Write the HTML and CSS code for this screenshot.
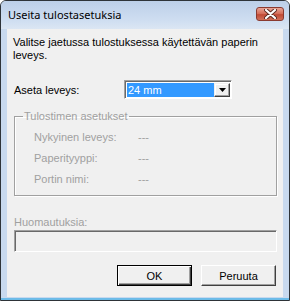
FILE: index.html
```html
<!DOCTYPE html>
<html lang="fi">
<head>
    <meta charset="UTF-8">
    <meta name="viewport" content="width=device-width, initial-scale=1.0">
    <title>Useita tulostasetuksia</title>
    <link rel="stylesheet" href="styles.css">
</head>
<body>

<div class="window">
    <div class="titlebar">
        <span class="title">Useita tulostasetuksia</span>
        <button class="close-btn" aria-label="Sulje">
            <svg width="13" height="10" viewBox="0 0 13 10">
                <path d="M2 1 L11 9 M11 1 L2 9" stroke="#5a2a22" stroke-width="4" stroke-linecap="round"/>
                <path d="M2 1 L11 9 M11 1 L2 9" stroke="#ffffff" stroke-width="2.2" stroke-linecap="round"/>
            </svg>
        </button>
    </div>

    <div class="client">
        <p class="intro">Valitse jaetussa tulostuksessa käytettävän paperin leveys.</p>

        <div class="width-row">
            <span class="label">Aseta leveys:</span>
            <div class="combo">
                <span class="combo-value">24 mm</span>
                <span class="combo-arrow">
                    <svg width="7" height="4" viewBox="0 0 7 4"><path d="M0 0 H7 L3.5 4 Z" fill="#000"/></svg>
                </span>
            </div>
        </div>

        <fieldset class="group">
            <legend>Tulostimen asetukset</legend>
            <div class="info-row">
                <span class="info-label">Nykyinen leveys:</span>
                <span class="info-value">---</span>
            </div>
            <div class="info-row">
                <span class="info-label">Paperityyppi:</span>
                <span class="info-value">---</span>
            </div>
            <div class="info-row">
                <span class="info-label">Portin nimi:</span>
                <span class="info-value">---</span>
            </div>
        </fieldset>

        <div class="notes-label">Huomautuksia:</div>
        <div class="notes-box"></div>

        <div class="buttons">
            <button class="btn btn-default">OK</button>
            <button class="btn">Peruuta</button>
        </div>
    </div>
</div>

</body>
</html>
```

FILE: styles.css
```css
body {
    margin: 0;
    font-family: "Liberation Sans", Arial, sans-serif;
    font-size: 11px;
    background: #ffffff;
}

.window {
    width: 290px;
    height: 301px;
    box-sizing: border-box;
    border: 1px solid #2e3338;
    border-radius: 6px 6px 0 0;
    background: #c8d9ee;
    padding: 0 6px 3px 6px;
    display: flex;
    flex-direction: column;
    box-shadow: inset 0 -2px 0 #6cbbe8;
}

.titlebar {
    height: 28px;
    margin: 0 -6px;
    padding: 0 5px 0 7px;
    display: flex;
    align-items: flex-start;
    background: linear-gradient(#bccfe8, #cfdef1 70%, #dbe6f3);
    border-radius: 5px 5px 0 0;
}

.title {
    font-family: "Noto Sans", sans-serif;
    font-size: 11px;
    line-height: 16px;
    margin-top: 6px;
    color: #000;
}

.close-btn {
    margin-left: auto;
    margin-top: 6px;
    width: 28px;
    height: 14px;
    padding: 0;
    border: 1px solid #8a3a30;
    border-radius: 3px;
    background: linear-gradient(#e8a596, #d46a55 50%, #c04a35 55%, #d0705a);
    display: flex;
    align-items: center;
    justify-content: center;
}

.client {
    flex: 1;
    background: #f0f0f0;
    padding: 0 6px 0 7px;
    display: flex;
    flex-direction: column;
}

.intro {
    margin: 7px 0 0 -1px;
    line-height: 13px;
    width: 250px;
}

.width-row {
    display: flex;
    align-items: center;
    margin-top: 18px;
}

.label {
    width: 110px;
}

.combo {
    width: 108px;
    height: 19px;
    box-sizing: border-box;
    border: 1px solid;
    border-color: #a0a0a0 #ffffff #ffffff #a0a0a0;
    box-shadow: inset 1px 1px 0 #696969;
    background: #ffffff;
    display: flex;
    padding: 2px 1px 1px 2px;
}

.combo-value {
    flex: 1;
    background: #3399ff;
    color: #ffffff;
    line-height: 15px;
    padding-left: 1px;
}

.combo-arrow {
    width: 16px;
    box-sizing: border-box;
    border: 1px solid;
    border-color: #f0f0f0 #404040 #404040 #f0f0f0;
    box-shadow: inset -1px -1px 0 #a0a0a0, inset 1px 1px 0 #ffffff;
    background: #f0f0f0;
    display: flex;
    align-items: center;
    justify-content: center;
}

.group {
    margin: 11px 0 0 0;
    padding: 8px 0 0 19px;
    height: 86px;
    box-sizing: border-box;
    border: 1px solid #a0a0a0;
    box-shadow: 1px 1px 0 #ffffff, inset 1px 1px 0 #ffffff;
    color: #a0a0a0;
}

.group legend {
    padding: 0 1px;
    margin-left: -11px;
    line-height: 13px;
}

.info-row {
    display: flex;
    line-height: 13px;
    margin-bottom: 8px;
}

.info-label {
    width: 104px;
}

.notes-label {
    color: #a0a0a0;
    margin-top: 20px;
    line-height: 13px;
}

.notes-box {
    margin-top: 1px;
    height: 22px;
    box-sizing: border-box;
    border: 1px solid;
    border-color: #a0a0a0 #ffffff #ffffff #a0a0a0;
    box-shadow: inset 1px 1px 0 #696969;
    background: #f0f0f0;
}

.buttons {
    display: flex;
    justify-content: flex-end;
    gap: 9px;
    margin-top: 13px;
    margin-right: 1px;
}

.btn {
    width: 75px;
    height: 21px;
    padding: 0;
    font-family: "Liberation Sans", Arial, sans-serif;
    font-size: 11px;
    color: #000;
    background: #f0f0f0;
    border: 1px solid;
    border-color: #ffffff #404040 #404040 #ffffff;
    box-shadow: inset -1px -1px 0 #a0a0a0;
}

.btn-default {
    border-color: #000;
    box-shadow: inset 1px 1px 0 #ffffff, inset -1px -1px 0 #404040, inset -2px -2px 0 #a0a0a0;
}
```
